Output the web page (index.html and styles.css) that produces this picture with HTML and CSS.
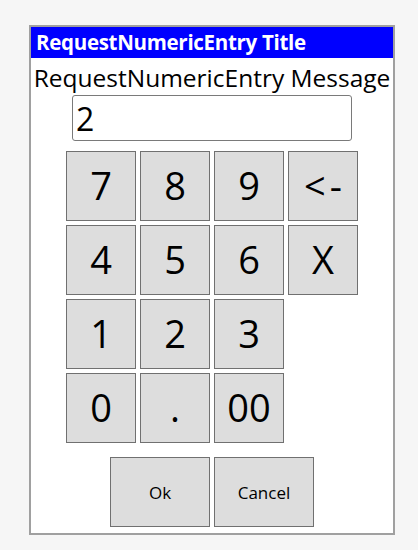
FILE: index.html
```html
<!DOCTYPE html>
<html>
<head>
<meta charset="utf-8">
<link rel="stylesheet" href="styles.css">
</head>
<body>
<div class="dialog">
  <div class="title">RequestNumericEntry Title</div>
  <div class="message">RequestNumericEntry Message</div>
  <div class="entry"><span class="value">2</span></div>
  <div class="keypad">
    <button class="key">7</button>
    <button class="key">8</button>
    <button class="key">9</button>
    <button class="key back">&lt;-</button>
    <button class="key">4</button>
    <button class="key">5</button>
    <button class="key">6</button>
    <button class="key">X</button>
    <button class="key">1</button>
    <button class="key">2</button>
    <button class="key">3</button>
    <span class="empty"></span>
    <button class="key">0</button>
    <button class="key">.</button>
    <button class="key">00</button>
    <span class="empty"></span>
  </div>
  <div class="actions">
    <button class="action">Ok</button>
    <button class="action">Cancel</button>
  </div>
</div>
</body>
</html>
```
FILE: styles.css
```css
html, body {
  margin: 0;
  padding: 0;
  background: #f6f6f6;
  font-family: "Open Sans", "Noto Sans", sans-serif;
}
body {
  padding: 25px 0 0 29px;
}
.dialog {
  width: 362px;
  height: 506px;
  border: 2px solid #a0a0a0;
  background: #ffffff;
  display: flex;
  flex-direction: column;
  align-items: center;
}
.title {
  align-self: stretch;
  height: 31px;
  background: #0000ff;
  color: #ffffff;
  font-weight: bold;
  font-size: 20.5px;
  line-height: 31px;
  padding-left: 5px;
  letter-spacing: -0.3px;
  white-space: nowrap;
}
.message {
  margin-top: 2px;
  height: 35px;
  font-size: 24.5px;
  line-height: 35px;
  color: #000;
  white-space: nowrap;
  letter-spacing: 0;
}
.entry {
  box-sizing: border-box;
  width: 280px;
  height: 46px;
  border: 1px solid #7a7a7a;
  border-radius: 3px;
  padding-left: 3px;
  display: flex;
  align-items: center;
}
.value {
  font-size: 32px;
  color: #000;
}
.keypad {
  margin-top: 10px;
  display: grid;
  grid-template-columns: repeat(4, 70px);
  grid-auto-rows: 70px;
  gap: 4px;
}
.key, .action {
  box-sizing: border-box;
  margin: 0;
  padding: 0;
  background: #dddddd;
  border: 1px solid #707070;
  border-radius: 0;
  color: #000;
  font-family: "Open Sans", "Noto Sans", sans-serif;
}
.key {
  width: 70px;
  height: 70px;
  font-size: 38px;
  line-height: 1;
  padding-bottom: 2px;
}
.back {
  letter-spacing: 4px;
  padding-left: 4px;
}
.actions {
  margin-top: 14px;
  display: flex;
  gap: 4px;
}
.action {
  width: 100px;
  height: 70px;
  font-size: 17px;
}
```
